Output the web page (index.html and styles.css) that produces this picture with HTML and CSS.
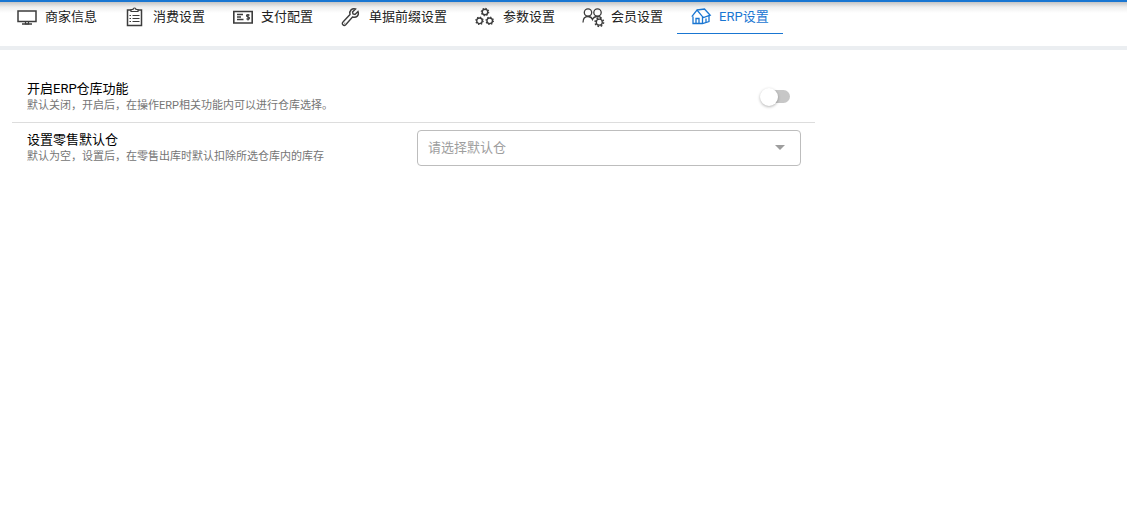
FILE: index.html
```html
<!DOCTYPE html>
<html lang="zh-CN">
<head>
<meta charset="utf-8">
<meta name="viewport" content="width=device-width, initial-scale=1">
<title>ERP设置</title>
<link rel="stylesheet" href="styles.css">
</head>
<body>
<header class="topbar">
  <nav class="tabs">
    <a class="tab" href="#merchant">
      <svg class="icon" viewBox="0 0 20 20"><path d="M1 4h18v10.500H1z" stroke-width="1.500"/><path d="M5 17h10" stroke-width="1.500"/><path d="M8.500 14.500v2.500h3v-2.500"/></svg>
      <span>商家信息</span>
    </a>
    <a class="tab" href="#consume">
      <svg class="icon" viewBox="0 0 20 20"><path d="M6 3H2.500v15.500h14V3H13" stroke-width="1.500"/><path d="M6 2.500h2a1.500 1.500 0 0 1 3 0h2v2H6z"/><path d="M4.500 8.500h1.500M4.500 11.500h1.500M4.500 14.500h1.500M7.500 8.500h7M7.500 11.500h7M7.500 14.500h7"/></svg>
      <span>消费设置</span>
    </a>
    <a class="tab" href="#payment">
      <svg class="icon" viewBox="0 0 20 20"><path d="M.800 4.500h18.400v11.500H.800z" stroke-width="1.600"/><path d="M4 7.500h6M4 10h4M4 12.500h6.500" stroke-width="1.400"/><path d="M16.500 8.300c-1-1-3-.800-3 .500s3 .800 3 2.300-2 1.500-3 .500M15 7v6.500"/></svg>
      <span>支付配置</span>
    </a>
    <a class="tab" href="#prefix">
      <svg class="icon" viewBox="0 0 20 20"><path d="M17 4.500l-3 3-2-.500-.500-2 3-3C11 1 8 3.500 9 7.500l-7 7.500c-2 2 .800 4.500 2.700 2.700L11.500 10c4 1 7-1.500 5.500-5.500z" stroke-width="1.400"/><path d="M3.500 15.800l.500.500"/></svg>
      <span>单据前缀设置</span>
    </a>
    <a class="tab" href="#params">
      <svg class="icon" viewBox="0 0 20 20"><g stroke-width="1.400"><circle cx="10" cy="5" r="2.800"/><circle cx="4.500" cy="13.800" r="2.800"/><circle cx="14.700" cy="13.800" r="2.800"/></g><g stroke-width="1.300" stroke-dasharray="1.300 1.560"><circle cx="10" cy="5" r="3.640"/><circle cx="4.500" cy="13.800" r="3.640"/><circle cx="14.700" cy="13.800" r="3.640"/></g></svg>
      <span>参数设置</span>
    </a>
    <a class="tab" href="#members">
      <svg class="icon" viewBox="1 0 20 20"><g stroke-width="1.300"><circle cx="6" cy="5.500" r="3.700"/><circle cx="15.500" cy="5.500" r="3.700"/><path d="M1 15.500c0-4 2-6 5-6 2.200 0 3.700 1 4.500 3 .800-2 2.300-3 5-3 1.800 0 3.300.600 4 1.800"/><circle cx="17.300" cy="15.200" r="3"/></g><circle cx="17.300" cy="15.200" r="4.200" stroke-width="1.600" stroke-dasharray="1.650 1.650"/></svg>
      <span>会员设置</span>
    </a>
    <a class="tab tab-active" href="#erp" aria-current="page">
      <svg class="icon" viewBox="0 0 20 20"><g stroke-width="1.300"><path d="M2 9.500v7h9.500l6.500-2V8.500"/><path d="M.800 9.700L6 3l5.500 6.700v6.800"/><path d="M6 3l7.500-1 5.700 6.200-6.700 2.300-1-.800"/><path d="M5 16.500v-5h3v5"/><path d="M15 15v-3.500"/></g></svg>
      <span>ERP设置</span>
    </a>
  </nav>
</header>
<main class="settings">
  <section class="row row-first">
    <div class="info">
      <label class="title" for="warehouse-switch">开启ERP仓库功能</label>
      <p class="note">默认关闭，开启后，在操作ERP相关功能内可以进行仓库选择。</p>
    </div>
    <div class="control control-switch">
      <input class="switch" id="warehouse-switch" type="checkbox" role="switch">
    </div>
  </section>
  <section class="row">
    <div class="info">
      <label class="title" for="default-warehouse">设置零售默认仓</label>
      <p class="note">默认为空，设置后，在零售出库时默认扣除所选仓库内的库存</p>
    </div>
    <div class="control">
      <div class="select-box">
        <select class="select" id="default-warehouse"><option value="">请选择默认仓</option></select>
        <svg class="arrow" viewBox="0 0 10 5"><path d="M0 0h10L5 5z"/></svg>
      </div>
    </div>
  </section>
</main>
</body>
</html>
```
FILE: styles.css
```css
* { box-sizing: border-box; }

body {
  margin: 0;
  background: #fff;
  color: #000;
  font: 13px/18px Roboto, "Noto Sans CJK SC", sans-serif;
}

.topbar {
  border-top: 2px solid #1976d2;
  border-bottom: 4px solid #ebeef1;
  background: linear-gradient(#c4c4c4, #eee 5px, #fff 11px);
}

.tabs {
  display: flex;
  padding: 0 3px 12px;
}

.tab {
  display: flex;
  align-items: center;
  gap: 8px;
  height: 32px;
  padding: 0 14px 2px;
  border-bottom: 1px solid transparent;
  color: #222;
  text-decoration: none;
  white-space: nowrap;
}

.tab-active {
  border-bottom-color: #1976d2;
  color: #1976d2;
}

.icon {
  width: 20px;
  height: 20px;
  flex: none;
  overflow: visible;
  fill: none;
  stroke: #3c3c3c;
  stroke-width: 1.2;
}

.tab-active .icon { stroke: currentColor; }

.settings {
  max-width: 815px;
  padding: 22px 0 0 12px;
}

.row {
  display: flex;
  align-items: center;
  gap: 6px;
  min-height: 50px;
  padding: 7px 14px 7px 15px;
}

.row-first {
  min-height: 51px;
  border-bottom: 1px solid #ddd;
}

.info, .control {
  flex: 1;
  min-width: 0;
}

.info { white-space: nowrap; }

.title {
  display: block;
  line-height: 18px;
}

.note {
  margin: 0;
  color: #757575;
  font-size: 11px;
  line-height: 16px;
}

.control-switch {
  display: flex;
  justify-content: flex-end;
  padding-right: 11px;
}

.switch {
  position: relative;
  appearance: none;
  width: 30px;
  height: 18px;
  margin: 0;
  cursor: pointer;
}

.switch::before {
  content: "";
  position: absolute;
  inset: 2px 0 3px 3px;
  border-radius: 7px;
  background: #c7c7c7;
}

.switch::after {
  content: "";
  position: absolute;
  top: 0;
  left: 0;
  width: 18px;
  height: 18px;
  border-radius: 50%;
  background: #fff;
  box-shadow: 0 1px 3px rgba(0, 0, 0, 0.3);
}

.switch:checked::before { background: #90caf9; }

.switch:checked::after {
  left: 12px;
  background: #1976d2;
}

.select-box { position: relative; }

.select {
  display: block;
  appearance: none;
  width: 100%;
  height: 36px;
  padding: 0 36px 1px 10px;
  border: 1px solid #bdbdbd;
  border-radius: 4px;
  background: #fff;
  color: #9e9e9e;
  font: inherit;
}

.arrow {
  position: absolute;
  top: 15px;
  right: 16px;
  width: 10px;
  height: 5px;
  fill: #9e9e9e;
  pointer-events: none;
}
```
